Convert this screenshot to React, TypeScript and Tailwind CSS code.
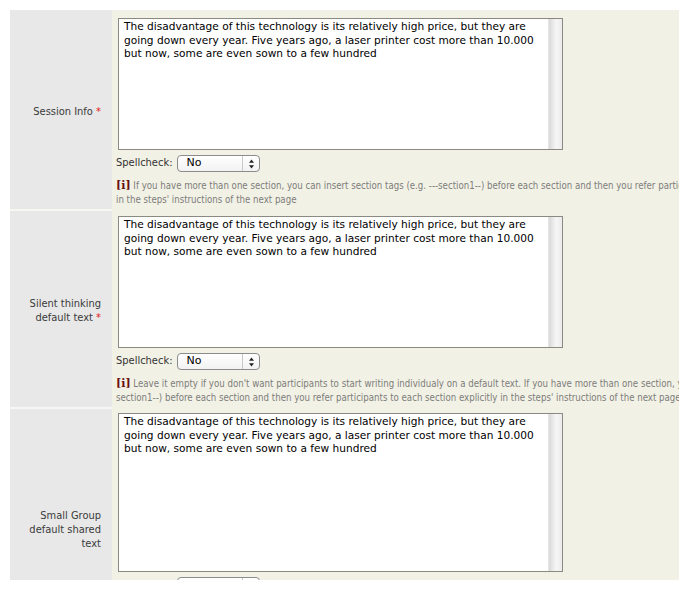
import React from "react";

const TEXT = (
  <>
    The disadvantage of this technology is its relatively high price, but they are
    <br />
    going down every year. Five years ago, a laser printer cost more than 10.000
    <br />
    but now, some are even sown to a few hundred
  </>
);

function FakeTextarea({ h }: { h: string }) {
  return (
    <div className={`ml-[6px] flex w-[445px] ${h} border border-[#8a8a82] bg-white`}>
      <div
        className="flex-1 whitespace-nowrap px-[5px] pt-[1px] text-[10.6px] leading-[13.5px] text-black"
        style={{ fontFamily: '"DejaVu Sans", Verdana, sans-serif' }}
      >
        {TEXT}
      </div>
      <div className="w-[14px] bg-[linear-gradient(to_right,#d9d9d9,#f6f6f6_55%,#ebebeb)] border-l border-[#e4e4e4]" />
    </div>
  );
}

function Spellcheck() {
  return (
    <div className="mt-[5px] flex h-[17px] items-center pl-[4px]">
      <span className="text-[11px] text-[#333]">Spellcheck:</span>
      <div className="ml-[5px] flex h-[17px] w-[83px] items-center rounded-[4px] border border-[#8c8c8c] bg-[linear-gradient(#ffffff,#f2f2f2)] shadow-[inset_0_1px_0_#fff]">
        <span className="flex-1 pl-[8px] text-[11px] text-black" style={{ fontFamily: '"DejaVu Sans", Verdana, sans-serif' }}>
          No
        </span>
        <div className="flex h-full w-[17px] items-center justify-center border-l border-[#c8c8c8]">
          <svg width="7" height="10" viewBox="0 0 7 10">
            <path d="M3.5 0.5 L6 3.8 L1 3.8 Z" fill="#222" />
            <path d="M3.5 9.5 L6 6.2 L1 6.2 Z" fill="#222" />
          </svg>
        </div>
      </div>
    </div>
  );
}

function Info({ children }: { children: React.ReactNode }) {
  return (
    <div className="mt-[7px] whitespace-nowrap pl-[4px] text-[9.6px] leading-[14px] text-[#7d7d7a]">
      <span className="font-bold text-[11px] text-[#6a1010]" style={{ fontFamily: '"DejaVu Serif", "Liberation Serif", serif' }}>
        [i]
      </span>{" "}
      {children}
    </div>
  );
}

function Label({ children, star = true }: { children: React.ReactNode; star?: boolean }) {
  return (
    <div className="flex w-[102px] shrink-0 items-center justify-end border-b-2 border-[#f6f6f3] bg-[#e8e8e8] pr-[11px] pt-[4px] text-right text-[11px] leading-[14px] text-[#3a3a3a]">
      <span>
        {children}
        {star && <span className="text-[#e01818]"> *</span>}
      </span>
    </div>
  );
}

export default function App() {
  return (
    <div className="min-h-screen bg-white pl-[10px] pt-[10px]" style={{ fontFamily: '"DejaVu Sans Condensed", "DejaVu Sans", Tahoma, sans-serif' }}>
      <div className="h-[570px] w-[669px] overflow-hidden bg-[#f2f1e6]">
        <div className="flex h-[201px]">
          <Label>Session Info</Label>
          <div className="flex-1 pt-[8px]">
            <FakeTextarea h="h-[132px]" />
            <Spellcheck />
            <Info>
              If you have more than one section, you can insert section tags (e.g. ---section1--) before each section and then you refer participants to each section explicitly
              <br />
              in the steps' instructions of the next page
            </Info>
          </div>
        </div>
        <div className="flex h-[198px]">
          <Label>
            Silent thinking
            <br />
            default text
          </Label>
          <div className="flex-1 pt-[5px]">
            <FakeTextarea h="h-[132px]" />
            <Spellcheck />
            <Info>
              Leave it empty if you don't want participants to start writing individualy on a default text. If you have more than one section, you can insert section tags (e.g. ---
              <br />
              section1--) before each section and then you refer participants to each section explicitly in the steps' instructions of the next page
            </Info>
          </div>
        </div>
        <div className="flex h-[240px]">
          <Label star={false}>
            Small Group
            <br />
            default shared
            <br />
            text
          </Label>
          <div className="flex-1 pt-[4px]">
            <FakeTextarea h="h-[159px]" />
            <Spellcheck />
          </div>
        </div>
      </div>
    </div>
  );
}
